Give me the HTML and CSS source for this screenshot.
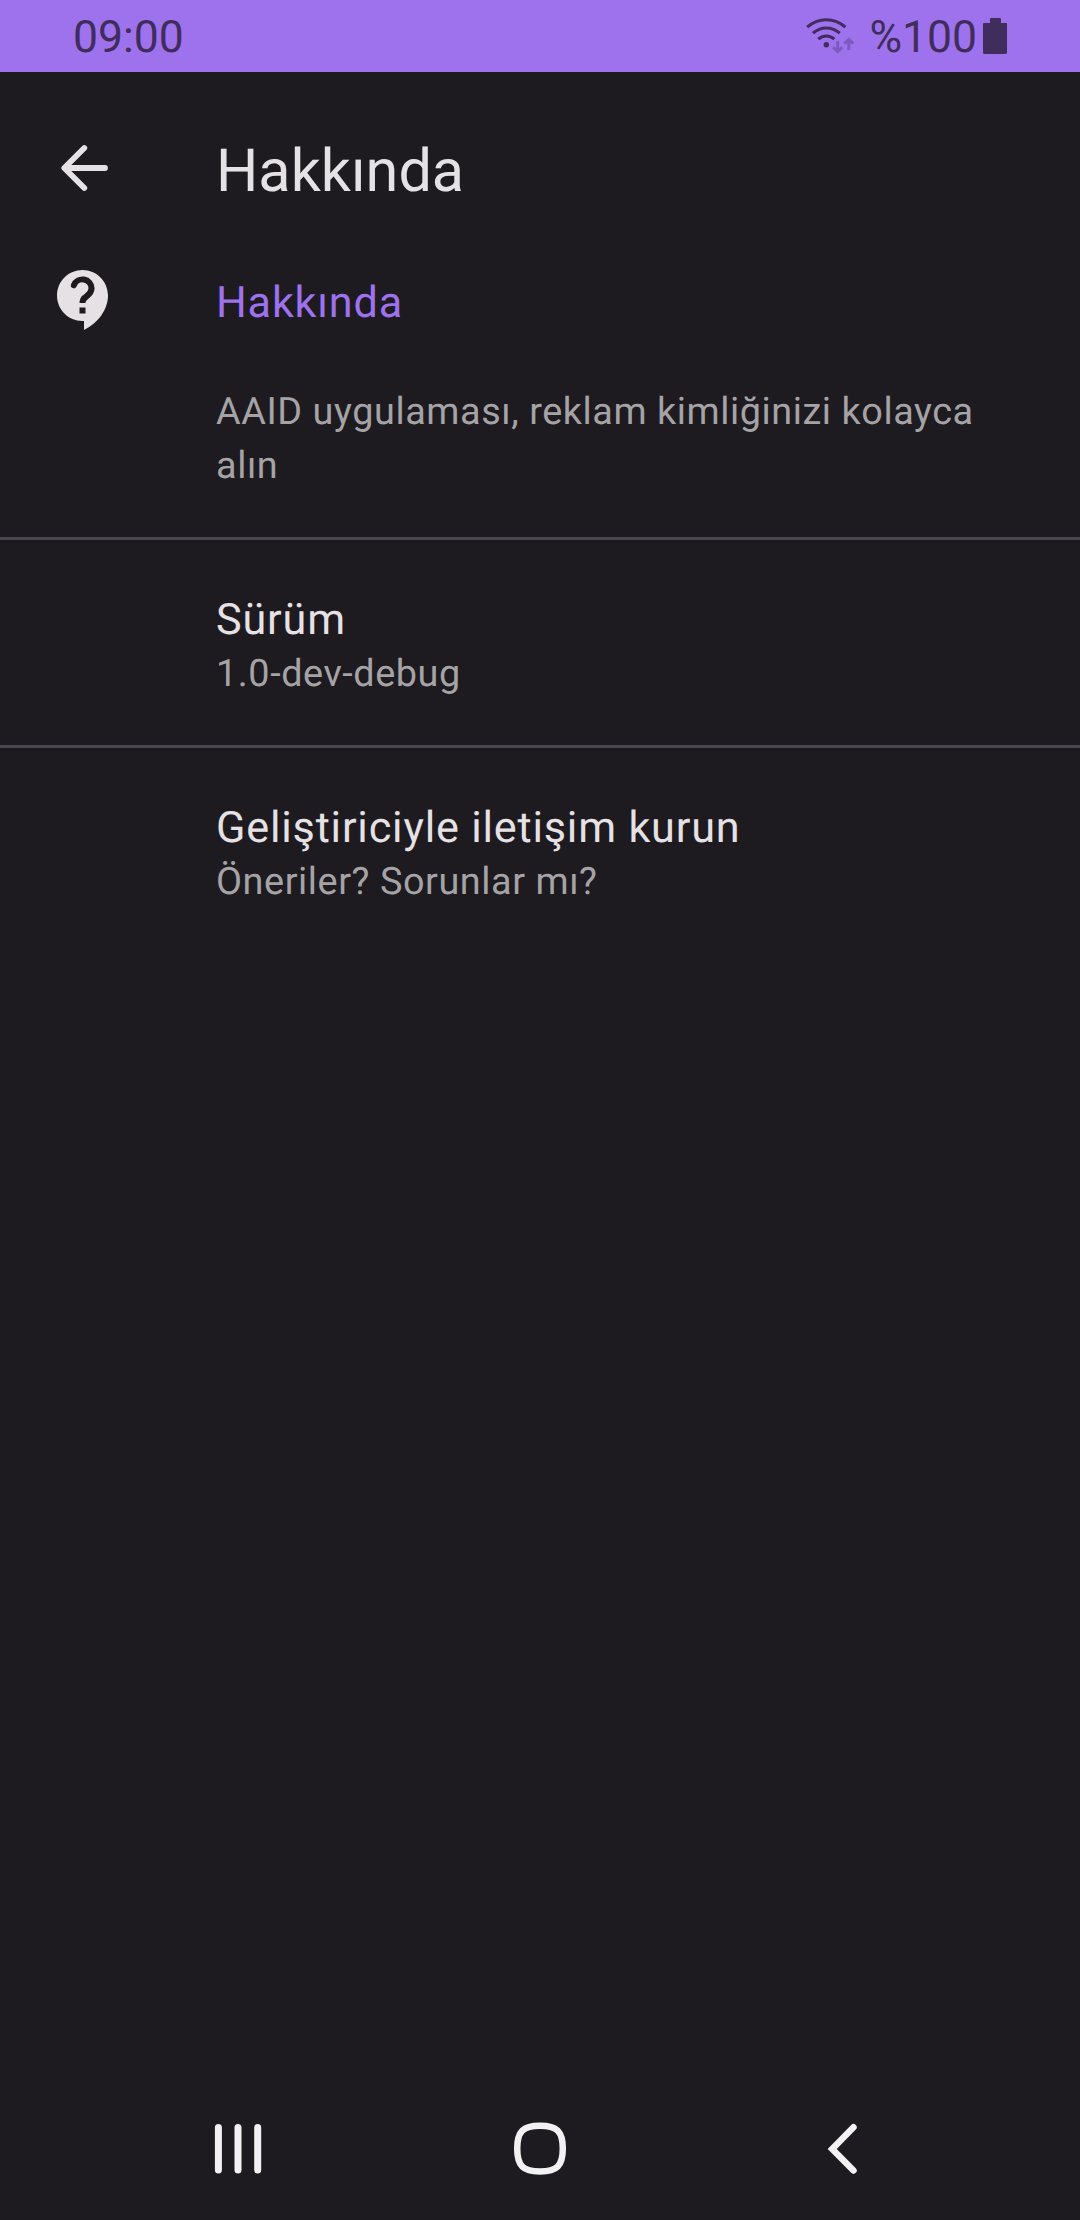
FILE: index.html
```html
<!DOCTYPE html>
<html lang="tr">
<head>
<meta charset="utf-8">
<title>Hakkında</title>
<link rel="stylesheet" href="styles.css">
</head>
<body>
<div class="screen">
  <div class="status">
    <span class="clock">09:00</span>
    <svg class="wifi" width="50" height="40" viewBox="805 16 50 40">
      <g fill="none" stroke="#402c5d" stroke-width="3">
        <path d="M807.2 27.2Q815.5 19.7 826.3 19.7T845.4 27.2"/>
        <path d="M813 33.2Q818.7 27.9 826.3 27.9T839.8 33.2"/>
        <path d="M818.3 39.2Q821.8 36 826.3 36T834.4 39.2"/>
      </g>
      <circle cx="826.3" cy="44.7" r="2.7" fill="#402c5d"/>
      <g fill="none" stroke="#7d5abd" stroke-width="3">
        <path d="M837.7 41V52M833.2 47.2L837.7 51.7L842.2 47.2"/>
        <path d="M848.8 50V39M844.3 43.8L848.8 39.3L853.3 43.8"/>
      </g>
    </svg>
    <span class="percent">%100</span>
    <svg class="battery" width="24" height="36" viewBox="0 0 24 36">
      <path fill="#402c5d" d="M8 0H17Q18 0 18 1V5H23Q24 5 24 6V34.500Q24 36 22.500 36H1.500Q0 36 0 34.500V6Q0 5 1 5H7V1Q7 0 8 0Z"/>
    </svg>
  </div>

  <header class="header">
    <svg class="back" width="48" height="48" viewBox="0 0 48 48" fill="none" stroke="#e6e1e5" stroke-width="5.800" stroke-linecap="round" stroke-linejoin="round">
      <path d="M24.300 4L4.300 24L24.300 44M5.500 24H45"/>
    </svg>
    <h1 class="title">Hakkında</h1>
  </header>

  <main class="list">
    <section class="item about">
      <svg class="help" width="72" height="72" viewBox="0 0 24 24">
        <path fill="#e6e1e5" d="M11.500 2C6.810 2 3 5.810 3 10.500S6.810 19 11.500 19H12V22C16.860 19.660 20 15 20 10.500C20 5.810 16.190 2 11.500 2Z"/>
        <path fill="none" stroke="#1d1b20" stroke-width="2" stroke-linecap="round" d="M8.620 7.100A3.050 3.050 0 0 1 14.520 8.100C14.450 10 13 10.400 12.100 11.500"/>
        <path fill="#1d1b20" d="M10.500 13Q10.500 11.500 11.500 10.500L13.200 10.800Q12.500 11.700 12.500 13ZM10.500 14.500H12.500V16.500H10.500Z"/>
      </svg>
      <div class="text">
        <h2 class="name accent">Hakkında</h2>
        <p class="detail">AAID uygulaması, reklam kimliğinizi kolayca alın</p>
      </div>
    </section>
    <section class="item">
      <h2 class="name">Sürüm</h2>
      <p class="detail">1.0-dev-debug</p>
    </section>
    <section class="item last">
      <h2 class="name">Geliştiriciyle iletişim kurun</h2>
      <p class="detail">Öneriler? Sorunlar mı?</p>
    </section>
  </main>

  <nav class="nav">
    <svg width="60" height="60" viewBox="208 2119 60 60" stroke="#f2f2f2" stroke-width="7" stroke-linecap="round">
      <path d="M218.400 2127.500V2170M238 2127.500V2170M257.700 2127.500V2170"/>
    </svg>
    <svg width="60" height="60" viewBox="510 2119 60 60" fill="none" stroke="#f2f2f2" stroke-width="6.500">
      <path d="M540 2125.700C557 2125.700 562.800 2131.500 562.800 2148.600S557 2171.500 540 2171.500S517.200 2165.700 517.200 2148.600S523 2125.700 540 2125.700Z"/>
    </svg>
    <svg width="60" height="60" viewBox="812 2119 60 60" fill="none" stroke="#f2f2f2" stroke-width="6.500" stroke-linecap="round">
      <path d="M853.500 2127.300L832.200 2149L853.500 2170.500"/>
    </svg>
  </nav>
</div>
</body>
</html>
```
FILE: styles.css
```css
* {
  box-sizing: border-box;
}

body {
  margin: 0;
  background: #1d1b20;
  font-family: Roboto, "Liberation Sans", sans-serif;
  text-rendering: geometricPrecision;
}

svg {
  display: block;
  flex: none;
}

h1,
h2,
p {
  margin: 0;
  font-weight: 400;
}

.screen {
  display: flex;
  flex-direction: column;
  width: 1080px;
  height: 2220px;
  color: #e6e1e5;
}

.status {
  display: flex;
  align-items: center;
  height: 72px;
  padding: 0 73px;
  background: #9e72ed;
  color: #402c5d;
  font-size: 44.5px;
  line-height: 72px;
}

.clock,
.percent {
  padding-top: 2px;
}

.wifi {
  margin-left: auto;
}

.percent {
  margin: 0 6px 0 14px;
}

.header {
  display: flex;
  align-items: center;
  height: 192px;
  padding-left: 60px;
}

.title {
  margin-left: 108px;
  padding-top: 6px;
  font-size: 59.4px;
  line-height: 76px;
}

.list {
  flex: 1;
}

.item {
  padding: 53px 64px 44px 216px;
  border-bottom: 3px solid #49464d;
}

.about {
  display: flex;
  gap: 96px;
  padding-top: 0;
  padding-left: 48px;
}

.last {
  border-bottom: 0;
}

.text {
  padding-top: 12px;
}

.name {
  font-size: 43.2px;
  line-height: 54px;
  letter-spacing: 0.81px;
}

.accent {
  margin-bottom: 55px;
  color: #9e72ed;
}

.detail {
  color: #a5a3a6;
  font-size: 37.8px;
  line-height: 54px;
  letter-spacing: 0.57px;
}

.nav {
  display: flex;
  justify-content: space-between;
  align-items: center;
  height: 142px;
  padding: 0 208px;
}
```
